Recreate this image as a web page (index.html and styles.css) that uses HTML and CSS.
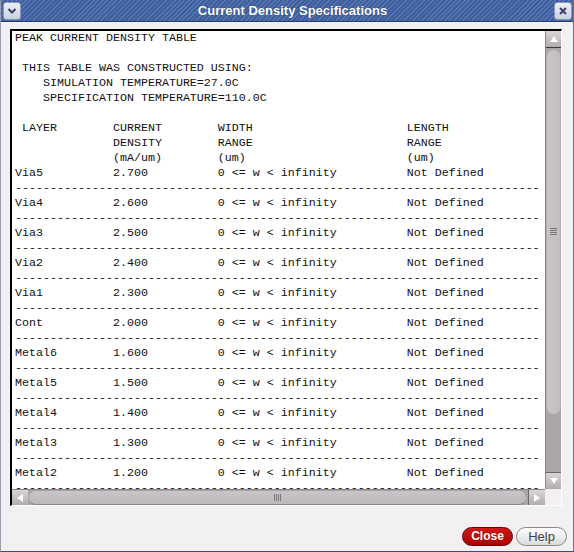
FILE: index.html
```html
<!DOCTYPE html>
<html>
<head>
<meta charset="utf-8">
<link rel="stylesheet" href="styles.css">
</head>
<body>
<div class="window">
  <div class="titlebar">
    <div class="tbtn">
      <svg width="10" height="8" viewBox="0 0 10 8"><path d="M1.5 2 L5 5.5 L8.5 2" fill="none" stroke="#33406a" stroke-width="2"/></svg>
    </div>
    <div class="title">Current Density Specifications</div>
    <div class="tbtn">
      <svg width="10" height="10" viewBox="0 0 10 10"><path d="M2 2 L8 8 M8 2 L2 8" fill="none" stroke="#33406a" stroke-width="2"/></svg>
    </div>
  </div>
  <div class="content">
    <div class="textbox">
      <div class="text"><pre>PEAK CURRENT DENSITY TABLE

 THIS TABLE WAS CONSTRUCTED USING:
    SIMULATION TEMPERATURE=27.0C
    SPECIFICATION TEMPERATURE=110.0C

 LAYER        CURRENT        WIDTH                      LENGTH
              DENSITY        RANGE                      RANGE
              (mA/um)        (um)                       (um)
Via5          2.700          0 &lt;= w &lt; infinity          Not Defined
---------------------------------------------------------------------------
Via4          2.600          0 &lt;= w &lt; infinity          Not Defined
---------------------------------------------------------------------------
Via3          2.500          0 &lt;= w &lt; infinity          Not Defined
---------------------------------------------------------------------------
Via2          2.400          0 &lt;= w &lt; infinity          Not Defined
---------------------------------------------------------------------------
Via1          2.300          0 &lt;= w &lt; infinity          Not Defined
---------------------------------------------------------------------------
Cont          2.000          0 &lt;= w &lt; infinity          Not Defined
---------------------------------------------------------------------------
Metal6        1.600          0 &lt;= w &lt; infinity          Not Defined
---------------------------------------------------------------------------
Metal5        1.500          0 &lt;= w &lt; infinity          Not Defined
---------------------------------------------------------------------------
Metal4        1.400          0 &lt;= w &lt; infinity          Not Defined
---------------------------------------------------------------------------
Metal3        1.300          0 &lt;= w &lt; infinity          Not Defined
---------------------------------------------------------------------------
Metal2        1.200          0 &lt;= w &lt; infinity          Not Defined
---------------------------------------------------------------------------</pre></div>
      <div class="vscroll">
        <div class="arrow up"><svg width="10" height="8" viewBox="0 0 10 8"><path d="M1 7 L5 1 L9 7 Z" fill="#fff"/></svg></div>
        <div class="vtrack">
          <div class="vthumb"><span class="vgrip"></span></div>
        </div>
        <div class="arrow down"><svg width="10" height="8" viewBox="0 0 10 8"><path d="M1 1 L5 7 L9 1 Z" fill="#fff"/></svg></div>
      </div>
      <div class="hscroll">
        <div class="arrow left"><svg width="8" height="10" viewBox="0 0 8 10"><path d="M7 1 L1 5 L7 9 Z" fill="#fff"/></svg></div>
        <div class="hthumb"><span class="hgrip"></span></div>
        <div class="arrow right"><svg width="8" height="10" viewBox="0 0 8 10"><path d="M1 1 L7 5 L1 9 Z" fill="#fff"/></svg></div>
      </div>
      <div class="corner"></div>
    </div>
  </div>
  <div class="buttons">
    <button class="btn close">Close</button>
    <button class="btn help">Help</button>
  </div>
</div>
</body>
</html>
```
FILE: styles.css
```css
html, body {
  margin: 0;
  padding: 0;
  background: #f3f0f3;
}
.window {
  width: 574px;
  height: 552px;
  box-sizing: border-box;
  display: flex;
  flex-direction: column;
  background: #f3f0f3;
  border-left: 1px solid #9aa0b0;
  border-right: 1px solid #6a7088;
  border-bottom: 1px solid #3a4a7a;
  overflow: hidden;
}
.titlebar {
  height: 22px;
  flex: none;
  display: flex;
  align-items: center;
  justify-content: space-between;
  padding: 0 2px 0 3px;
  margin: 0 -1px;
  background:
    repeating-linear-gradient(135deg, #3f5e9e 0px, #3f5e9e 2px, #5876b2 2px, #5876b2 3.2px);
  border-bottom: 1px solid #2a3c6c;
  box-sizing: border-box;
}
.tbtn {
  width: 18px;
  height: 18px;
  box-sizing: border-box;
  border: 1px solid #8a96b8;
  border-radius: 3px;
  background: linear-gradient(#eef0f6, #c9d0e0);
  display: flex;
  align-items: center;
  justify-content: center;
}
.title {
  font-family: "Liberation Sans", Arial, sans-serif;
  font-weight: bold;
  font-size: 13px;
  color: #fff;
  padding-left: 10px;
  text-shadow: 0 0 1px #1a2a5a;
}
.content {
  flex: none;
  padding: 7px 11px 0 9px;
}
.textbox {
  height: 477px;
  box-sizing: border-box;
  border-top: 2px solid #000;
  border-left: 2px solid #000;
  border-right: 1px solid #fff;
  border-bottom: 1px solid #fff;
  background: #fff;
  display: grid;
  grid-template-columns: 1fr 16px;
  grid-template-rows: 1fr 16px;
}
.text {
  overflow: hidden;
  padding: 0 0 0 3px;
}
.text pre {
  margin: 0;
  font-family: "Liberation Mono", "Courier New", monospace;
  font-size: 11.67px;
  line-height: 15px;
  color: #111;
}
.vscroll {
  display: flex;
  flex-direction: column;
  background: #a9a5a9;
  border-left: 1px solid #8a868a;
}
.arrow {
  flex: none;
  display: flex;
  align-items: center;
  justify-content: center;
  background: linear-gradient(#d8d4d8, #b0acb0);
}
.arrow.up, .arrow.down {
  height: 16px;
}
.arrow.up {
  border-bottom: 1px solid #3a363a;
}
.arrow.down {
  border-top: 1px solid #6a666a;
}
.vtrack {
  flex: 1;
  display: flex;
  flex-direction: column;
  padding: 1px 0 57px 0;
}
.vthumb {
  flex: 1;
  border-radius: 8px;
  background: linear-gradient(90deg, #c8c4c8, #c2bec2);
  border: 1px solid #b0acb0;
  display: flex;
  align-items: center;
  justify-content: center;
}
.vgrip {
  width: 7px;
  height: 8px;
  background: repeating-linear-gradient(180deg, #7a767a 0 1px, transparent 1px 2px);
}
.hscroll {
  display: flex;
  background: #a9a5a9;
  border-top: 1px solid #8a868a;
}
.arrow.left, .arrow.right {
  width: 16px;
}
.arrow.right {
  border-left: 1px solid #6a666a;
}
.hthumb {
  flex: 1;
  border-radius: 8px;
  background: linear-gradient(#c8c4c8, #bcb8bc);
  border: 1px solid #a8a4a8;
  border-bottom-color: #8a868a;
  margin: 0 1px 0 0;
  display: flex;
  align-items: center;
  justify-content: center;
}
.hgrip {
  width: 8px;
  height: 7px;
  background: repeating-linear-gradient(90deg, #7a767a 0 1px, transparent 1px 2px);
}
.corner {
  background: #f3f0f3;
}
.buttons {
  flex: 1;
  display: flex;
  justify-content: flex-end;
  align-items: flex-start;
  gap: 3px;
  padding: 21px 6px 0 0;
}
.btn {
  height: 19px;
  width: 51px;
  border-radius: 10px;
  font-family: "Liberation Sans", Arial, sans-serif;
  font-size: 12px;
  padding: 0;
  line-height: 17px;
}
.btn.close {
  background: linear-gradient(#d01818, #a80000);
  border: 1px solid #700000;
  color: #fff;
  font-weight: bold;
}
.btn.help {
  background: linear-gradient(#ffffff, #dcdade);
  border: 1px solid #8a868a;
  color: #444;
  font-size: 13px;
}
```
